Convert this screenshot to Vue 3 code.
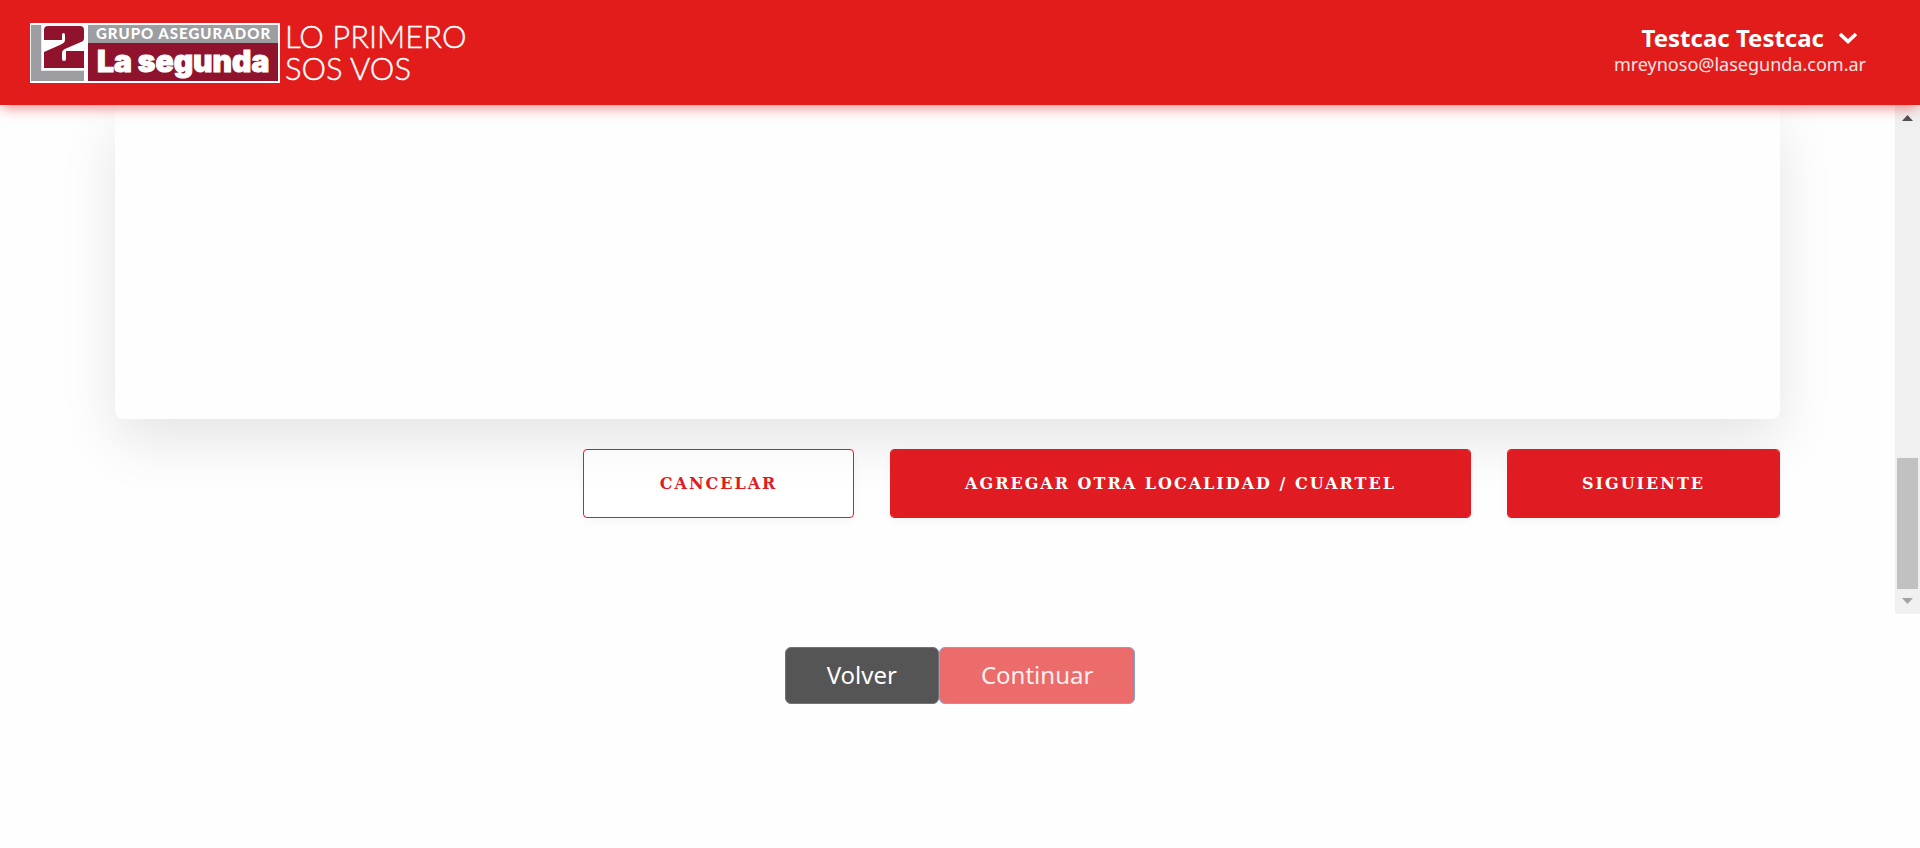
<script setup>
import { ref } from 'vue'

const user = ref({ name: 'Testcac Testcac', email: 'mreynoso@lasegunda.com.ar' })
</script>

<template>
  <div class="page">
    <header class="topbar">
      <a class="brand" href="#" aria-label="Grupo Asegurador La Segunda">
        <svg width="440" height="62" viewBox="0 0 440 62">
          <rect width="250" height="60" fill="#fff" />
          <path d="M1 2H11V48H54V58H1Z" fill="#9c9ea1" />
          <path d="M11.500 2V47.500H54" fill="none" stroke="#e4e4e4" stroke-width="1" />
          <path d="M18 3H50Q54 3 54 7V15Q54 18 51 19L36 25.500Q32 27 32 30V36Q32 38 34 38Q36 38 36 36V28H54V45H14V29L31 21.500Q35 19.500 35 17V12Q35 10 33.500 10Q32 10 32 12V17H14V7Q14 3 18 3Z" fill="#8f132d" />
          <rect x="58" y="2" width="190" height="18" fill="#9c9ea1" />
          <rect x="58" y="20" width="190" height="38" fill="#8f132d" />
          <text x="66" y="16" class="group">GRUPO ASEGURADOR</text>
          <text x="67" y="49" class="company">La segunda</text>
          <text x="255" y="25" class="slogan">LO PRIMERO</text>
          <text x="255" y="57" class="slogan">SOS VOS</text>
        </svg>
      </a>
      <div class="account">
        <button class="account-name" type="button">
          {{ user.name }}
          <svg width="20" height="14" viewBox="0 0 20 14" aria-hidden="true">
            <path d="M2 3L10 10.500L18 3" fill="none" stroke="#fff" stroke-width="3.600" />
          </svg>
        </button>
        <span class="account-email">{{ user.email }}</span>
      </div>
    </header>

    <main class="viewport">
      <div class="content">
        <section class="card"></section>
        <div class="actions">
          <button class="action outline" type="button">CANCELAR</button>
          <button class="action" type="button">AGREGAR OTRA LOCALIDAD / CUARTEL</button>
          <button class="action" type="button">SIGUIENTE</button>
        </div>
      </div>
      <div class="scrollbar" aria-hidden="true">
        <svg width="11" height="6" viewBox="0 0 11 6"><path d="M0 6L5.500 0L11 6Z" fill="#505050" /></svg>
        <div class="thumb"></div>
        <svg width="11" height="6" viewBox="0 0 11 6"><path d="M0 0L5.500 6L11 0Z" fill="#a3a3a3" /></svg>
      </div>
    </main>

    <footer class="steps">
      <button class="step back" type="button">Volver</button>
      <button class="step next" type="button">Continuar</button>
    </footer>
  </div>
</template>

<style>
body {
  background: #fefefe;
}
</style>

<style scoped>
.page {
  min-height: 100vh;
  box-sizing: border-box;
  font-family: "Noto Sans", sans-serif;
}
button {
  font-family: inherit;
  cursor: pointer;
}
.topbar {
  position: relative;
  z-index: 1;
  display: flex;
  align-items: center;
  justify-content: space-between;
  padding: 23px 54px 20px 30px;
  background: #e21b1b;
  box-shadow: 0 5px 12px -2px rgba(226, 27, 27, 0.5);
}
.brand,
.brand svg {
  display: block;
}
.brand svg {
  overflow: visible;
}
.group {
  font: 900 15px Lato, sans-serif;
  letter-spacing: 1px;
  fill: #fff;
}
.company {
  font: 900 30px Inter, sans-serif;
  fill: #fff;
  stroke: #fff;
  stroke-width: 1px;
}
.slogan {
  font: 300 31px Lato, sans-serif;
  fill: #fff;
  stroke: #fff;
  stroke-width: 0.4px;
}
.account {
  display: flex;
  flex-direction: column;
  align-items: flex-end;
  padding-bottom: 9px;
}
.account-name {
  display: flex;
  align-items: center;
  gap: 14px;
  margin-right: 8px;
  padding: 0;
  border: 0;
  background: none;
  color: #fff;
  font-size: 24px;
  font-weight: 700;
  line-height: 28px;
}
.account-email {
  color: #fbe6e6;
  font-size: 18px;
  line-height: 24px;
}
.viewport {
  display: flex;
  height: 60vh;
  overflow: hidden;
}
.content {
  flex: 1;
  display: flex;
  flex-direction: column;
  padding: 0 115px 96px;
}
.card {
  flex: 1;
  border-radius: 0 0 8px 8px;
  background: #fefefe;
  box-shadow: 0 22px 56px rgba(0, 0, 0, 0.1);
}
.actions {
  display: flex;
  justify-content: flex-end;
  gap: 36px;
  margin-top: 30px;
}
.action {
  min-width: 271px;
  padding: 0 74px;
  border: 1px solid #e01b22;
  border-radius: 4px;
  background: rgba(223, 18, 25, 0.96);
  background-clip: padding-box;
  box-shadow: 0 3px 9px rgba(0, 0, 0, 0.04);
  color: #fff;
  font-family: "DejaVu Serif", serif;
  font-size: 16px;
  font-weight: 700;
  letter-spacing: 2px;
  line-height: 67px;
}
.outline {
  background: rgba(255, 255, 255, 0.5);
  color: #e01b22;
}
.scrollbar {
  display: flex;
  flex-direction: column;
  align-items: center;
  width: 25px;
  padding: 10px 0;
  box-sizing: border-box;
  background: #f0f0f0;
}
.thumb {
  width: 21px;
  height: 131px;
  margin: auto 0 9px;
  background: #c1c1c1;
}
.steps {
  display: flex;
  justify-content: center;
  padding: 33px 0;
}
.step {
  padding: 0 41px 2px;
  border: 1px solid #6c757d;
  border-radius: 6px;
  background: #555;
  color: #fff;
  font-size: 24px;
  line-height: 53px;
}
.next {
  border-color: #80a0e8;
  background: #ec6b6b;
  color: #fdf0f0;
}
</style>
